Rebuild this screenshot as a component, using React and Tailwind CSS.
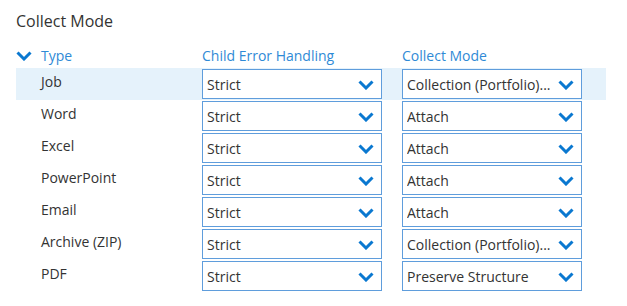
const rows = [
  { type: 'Job', child: 'Strict', mode: 'Collection (Portfolio)...', active: true },
  { type: 'Word', child: 'Strict', mode: 'Attach' },
  { type: 'Excel', child: 'Strict', mode: 'Attach' },
  { type: 'PowerPoint', child: 'Strict', mode: 'Attach' },
  { type: 'Email', child: 'Strict', mode: 'Attach' },
  { type: 'Archive (ZIP)', child: 'Strict', mode: 'Collection (Portfolio)...' },
  { type: 'PDF', child: 'Strict', mode: 'Preserve Structure' },
]

function Chevron({ className }) {
  return (
    <svg viewBox="0 0 16 10" className={className} fill="none">
      <path d="M1.5 1.5 L8 8 L14.5 1.5" stroke="#0a78d0" strokeWidth="3" />
    </svg>
  )
}

function Select({ value }) {
  return (
    <div className="h-[30px] w-[180px] border border-[#5f9ddc] bg-white flex items-center pl-1 pr-[7px] pt-px gap-2">
      <span className="flex-1 whitespace-nowrap overflow-hidden text-[14px] text-[#333]">{value}</span>
      <Chevron className="w-4 h-[10px] shrink-0" />
    </div>
  )
}

export default function App() {
  return (
    <div className="w-[627px] h-[306px] bg-white pl-4 pt-[9px] font-['Open_Sans',sans-serif] text-[#333]">
      <h2 className="text-[16px] leading-6">Collect Mode</h2>
      <div className="w-[590px] mt-3">
        <div className="grid grid-cols-[166px_180px_180px] gap-x-5 h-[23px] text-[14px] text-[#2f8ad6] items-start">
          <div className="flex items-center">
            <Chevron className="w-4 h-[10px] mr-[9px]" />
            <span>Type</span>
          </div>
          <span>Child Error Handling</span>
          <span>Collect Mode</span>
        </div>
        {rows.map((r) => (
          <div
            key={r.type}
            className={`grid grid-cols-[166px_180px_180px] gap-x-5 h-8 items-center ${r.active ? 'bg-[#e5f2fb]' : ''}`}
          >
            <span className="self-start pt-1 pl-[25px] text-[14px] leading-5">{r.type}</span>
            <Select value={r.child} />
            <Select value={r.mode} />
          </div>
        ))}
      </div>
    </div>
  )
}
